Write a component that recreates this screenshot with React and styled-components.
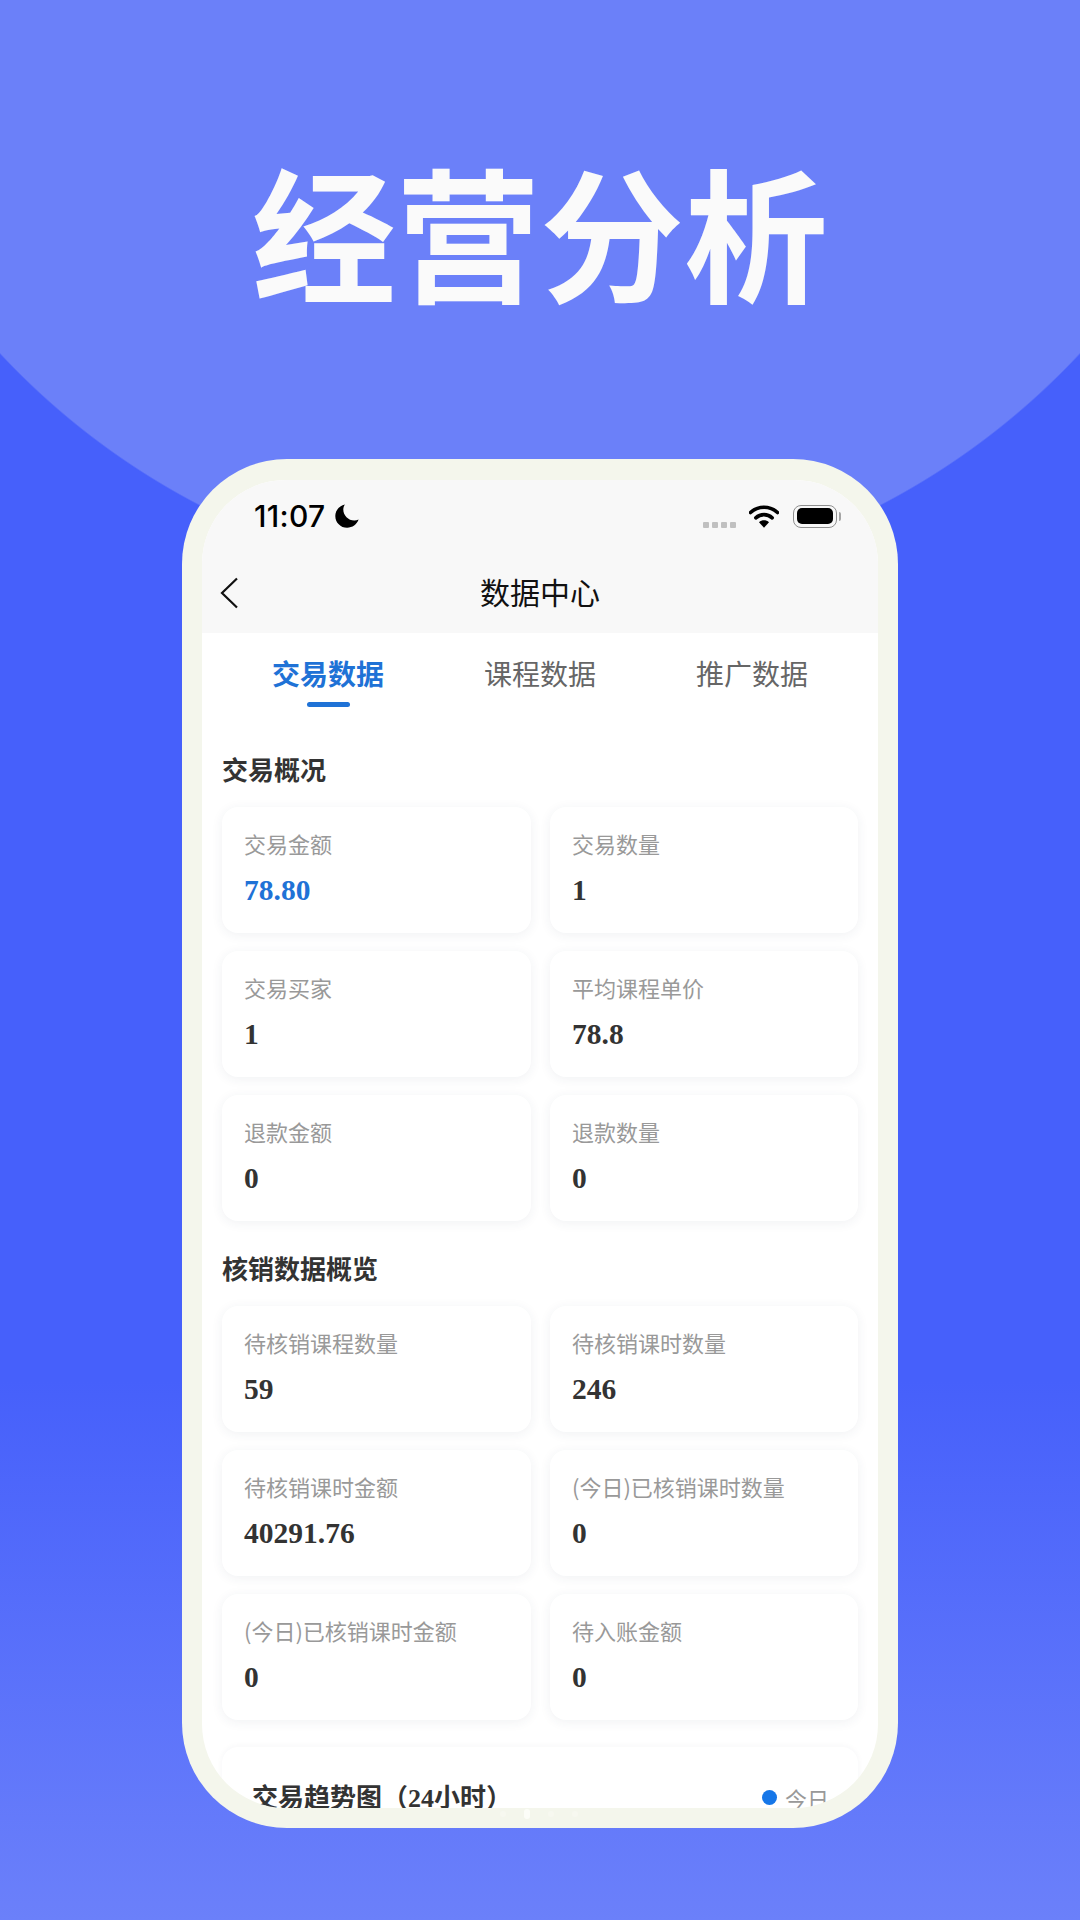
import React from 'react'
import styled, { createGlobalStyle } from 'styled-components'

const Global = createGlobalStyle`
  html, body { margin: 0; padding: 0; }
  body { font-family: "Noto Sans CJK SC", "Noto Sans", sans-serif; }
  * { box-sizing: border-box; }
`

const Page = styled.div`
  width: 1080px;
  height: 1920px;
  overflow: hidden;
  position: relative;
  background:
    radial-gradient(circle 739px at 540px -150px, #6b80f9 99.8%, transparent 100%),
    linear-gradient(180deg, #4660fb 0, #4660fb 1380px, #6b80fa 1920px);
`

const Hero = styled.h1`
  margin: 0;
  height: 459px;
  padding-top: 157px;
  font-size: 144px;
  line-height: 144px;
  font-weight: 700;
  text-align: center;
  color: #fafafa;
`

const Phone = styled.div`
  position: relative;
  width: 716px;
  height: 1369px;
  margin-left: 182px;
  padding: 21px 20px 20px;
  background: #f4f6ec;
  border-radius: 105px;
`

const Screen = styled.div`
  height: 100%;
  background: #fff;
  border-radius: 84px;
  overflow: hidden;
`

const Header = styled.div`
  background: #f8f8f8;
`

const StatusBar = styled.div`
  height: 72px;
  padding: 0 37px 0 52px;
  display: flex;
  align-items: center;
`

const Time = styled.span`
  font-family: Inter, Roboto, sans-serif;
  font-size: 30px;
  font-weight: 500;
  letter-spacing: 0.3px;
  color: #000;
  margin-right: 10px;
`

const StatusRight = styled.div`
  margin-left: auto;
  display: flex;
  align-items: center;
`

const Signal = styled.div`
  display: flex;
  gap: 3px;
  margin: 17px 13px 0 0;
`

const SignalDot = styled.i`
  width: 6px;
  height: 6px;
  border-radius: 1px;
  background: #c0c0c0;
`

const Battery = styled.div`
  display: flex;
  align-items: center;
  margin-left: 14px;
`

const BatteryBody = styled.div`
  width: 44px;
  height: 23px;
  padding: 2.5px 3px;
  border: 1.5px solid #8f8f8f;
  border-radius: 8px;
`

const BatteryFill = styled.div`
  height: 100%;
  background: #000;
  border-radius: 5px;
`

const BatteryCap = styled.div`
  width: 2px;
  height: 9px;
  margin-left: 2px;
  background: #a5a5a5;
  border-radius: 0 2px 2px 0;
`

const Nav = styled.div`
  position: relative;
  height: 81px;
  display: flex;
  align-items: center;
  justify-content: center;
`

const NavBack = styled.svg`
  position: absolute;
  left: 17px;
  top: 25px;
`

const NavTitle = styled.div`
  font-size: 30px;
  line-height: 40px;
  margin-top: -4px;
  color: #111;
`

const Tabs = styled.div`
  display: flex;
  padding: 20px 20px 0;
`

const Tab = styled.div`
  flex: 1;
  display: flex;
  flex-direction: column;
  align-items: center;
  font-size: 28px;
  line-height: 40px;
  font-weight: ${p => (p.$active ? 700 : 400)};
  color: ${p => (p.$active ? '#1f72d6' : '#666')};
`

const TabLine = styled.div`
  width: 43px;
  height: 5px;
  margin-top: 9px;
  border-radius: 3px;
  background: ${p => (p.$active ? '#1f72d6' : 'transparent')};
`

const Body = styled.div`
  padding: 0 20px;
`

const SectionTitle = styled.h2`
  margin: ${p => p.$top}px 0 20px;
  font-size: 26px;
  line-height: 36px;
  font-weight: 700;
  color: #333;
`

const Grid = styled.div`
  display: grid;
  grid-template-columns: 309px 308px;
  gap: 18px 19px;
`

const Card = styled.div`
  height: 126px;
  padding: 20px 22px 0 22px;
  background: #fff;
  border-radius: 16px;
  box-shadow: 0 2px 12px rgba(40, 50, 80, 0.07);
`

const Label = styled.div`
  font-size: 22px;
  line-height: 32px;
  color: #999;
`

const Value = styled.div`
  margin-top: 13px;
  font-family: "Liberation Serif", serif;
  font-size: 29.5px;
  line-height: 36px;
  font-weight: 700;
  color: ${p => (p.$accent ? '#1f72d6' : '#333')};
`

const TrendCard = styled.div`
  margin-top: 27px;
  padding: 31px 32px 0 30px;
  border-radius: 16px;
  box-shadow: 0 -1px 6px rgba(40, 50, 80, 0.04);
  display: flex;
  justify-content: space-between;
  align-items: center;
`

const TrendTitle = styled.div`
  font-size: 26px;
  line-height: 36px;
  font-weight: 700;
  color: #333;

  b {
    font-family: "Liberation Serif", serif;
  }
`

const Legend = styled.div`
  display: flex;
  align-items: center;
  font-size: 22px;
  color: #999;
`

const LegendDot = styled.i`
  width: 15px;
  height: 15px;
  margin-right: 8px;
  border-radius: 50%;
  background: #1677e8;
`

const LegendText = styled.span`
  width: 41px;
  white-space: nowrap;
  overflow: hidden;
`

const Pager = styled.div`
  position: absolute;
  left: 318px;
  bottom: 9px;
  display: flex;
  gap: 18px;
  align-items: center;
`

const PagerDot = styled.i`
  width: 6px;
  height: ${p => (p.$active ? 10 : 6)}px;
  border-radius: 3px;
  background: ${p => (p.$active ? '#fcfdf8' : '#f7f8f0')};
`

const overview = [
  { label: '交易金额', value: '78.80', accent: true },
  { label: '交易数量', value: '1' },
  { label: '交易买家', value: '1' },
  { label: '平均课程单价', value: '78.8' },
  { label: '退款金额', value: '0' },
  { label: '退款数量', value: '0' },
]

const writeOff = [
  { label: '待核销课程数量', value: '59' },
  { label: '待核销课时数量', value: '246' },
  { label: '待核销课时金额', value: '40291.76' },
  { label: '(今日)已核销课时数量', value: '0' },
  { label: '(今日)已核销课时金额', value: '0' },
  { label: '待入账金额', value: '0' },
]

const Stats = ({ items }) => (
  <Grid>
    {items.map(item => (
      <Card key={item.label}>
        <Label>{item.label}</Label>
        <Value $accent={item.accent}>{item.value}</Value>
      </Card>
    ))}
  </Grid>
)

const App = () => {
  return (
    <Page>
      <Global />
      <Hero>经营分析</Hero>
      <Phone>
        <Screen>
          <Header>
            <StatusBar>
              <Time>11:07</Time>
              <svg width="24" height="24" viewBox="0 0 24 24">
                <path d="M10 0.500C4.500 1.600 0.300 6.300 0.300 12c0 6.600 5.300 11.800 11.800 11.800 5.300 0 9.800-3.300 11.500-8.200-1.300.6-2.800 1-4.300 1C13.300 16.600 8.300 11.600 8.300 5.600 8.300 3.700 8.900 1.900 10 0.500z" fill="#000" />
              </svg>
              <StatusRight>
                <Signal>
                  <SignalDot />
                  <SignalDot />
                  <SignalDot />
                  <SignalDot />
                </Signal>
                <svg width="30" height="23" viewBox="0 0 30 23">
                  <path d="M1.500 7.500C9 .5 21 .5 28.500 7.500" fill="none" stroke="#000" strokeWidth="3.600" strokeLinecap="round" />
                  <path d="M6.800 12.800c4.700-4.300 11.700-4.300 16.400 0" fill="none" stroke="#000" strokeWidth="3.600" strokeLinecap="round" />
                  <path d="M10 17.200c2.900-2.500 7.100-2.500 10 0L15 22.800z" fill="#000" />
                </svg>
                <Battery>
                  <BatteryBody>
                    <BatteryFill />
                  </BatteryBody>
                  <BatteryCap />
                </Battery>
              </StatusRight>
            </StatusBar>
            <Nav>
              <NavBack width="20" height="32" viewBox="0 0 20 32">
                <path d="M18 1.500L3 16l15 14.500" fill="none" stroke="#111" strokeWidth="2.200" />
              </NavBack>
              <NavTitle>数据中心</NavTitle>
            </Nav>
          </Header>
          <Tabs>
            <Tab $active>
              交易数据
              <TabLine $active />
            </Tab>
            <Tab>
              课程数据
              <TabLine />
            </Tab>
            <Tab>
              推广数据
              <TabLine />
            </Tab>
          </Tabs>
          <Body>
            <SectionTitle $top={44}>交易概况</SectionTitle>
            <Stats items={overview} />
            <SectionTitle $top={29}>核销数据概览</SectionTitle>
            <Stats items={writeOff} />
            <TrendCard>
              <TrendTitle>
                交易趋势图（<b>24</b>小时）
              </TrendTitle>
              <Legend>
                <LegendDot />
                <LegendText>今日</LegendText>
              </Legend>
            </TrendCard>
          </Body>
        </Screen>
        <Pager>
          <PagerDot />
          <PagerDot $active />
          <PagerDot />
          <PagerDot />
        </Pager>
      </Phone>
    </Page>
  )
}

export default App
